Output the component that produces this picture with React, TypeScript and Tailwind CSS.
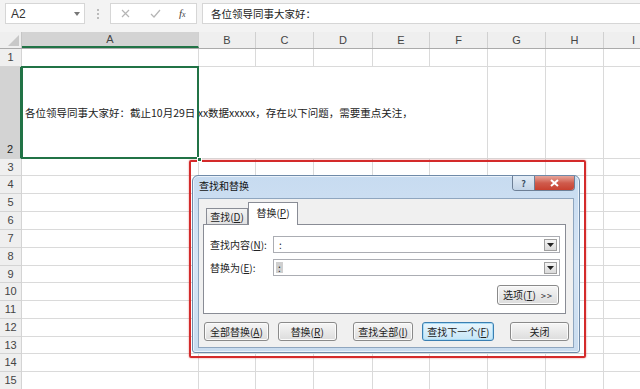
import React from "react";

const FONT = { fontFamily: '"Noto Sans CJK SC", "Liberation Sans", sans-serif' };

const cols = [
  { l: "A", w: 177 },
  { l: "B", w: 57 },
  { l: "C", w: 58 },
  { l: "D", w: 59 },
  { l: "E", w: 57 },
  { l: "F", w: 58 },
  { l: "G", w: 58 },
  { l: "H", w: 58 },
  { l: "I", w: 60 },
];

const rows: { n: number; h: number }[] = [
  { n: 1, h: 18 },
  { n: 2, h: 92 },
  { n: 3, h: 17 },
  { n: 4, h: 18 },
  { n: 5, h: 18 },
  { n: 6, h: 18 },
  { n: 7, h: 18 },
  { n: 8, h: 18 },
  { n: 9, h: 17 },
  { n: 10, h: 18 },
  { n: 11, h: 18 },
  { n: 12, h: 18 },
  { n: 13, h: 17 },
  { n: 14, h: 18 },
  { n: 15, h: 18 },
];

function U({ c }: { c: string }) {
  return <span className="underline underline-offset-1">{c}</span>;
}

function Btn({
  children,
  w,
  def,
  className,
}: {
  children: React.ReactNode;
  w: number;
  def?: boolean;
  className?: string;
}) {
  return (
    <div
      className={
        "h-[19px] flex items-center justify-center rounded-[3px] border text-[10px] text-[#222] leading-none " +
        (def
          ? "border-[#3c7fb1] bg-gradient-to-b from-[#eaf6fd] to-[#c4e5f6] shadow-[inset_0_0_0_1px_#a8dbf5] "
          : "border-[#8a8a8a] bg-gradient-to-b from-[#f6f6f6] to-[#dcdcdc] shadow-[inset_0_0_0_1px_#fbfbfb] ") +
        (className || "")
      }
      style={{ width: w }}
    >
      {children}
    </div>
  );
}

function DropBtn() {
  return (
    <div className="absolute right-[2px] top-[2px] w-[13px] h-[12px] border border-[#a0a0a0] bg-gradient-to-b from-[#f4f4f4] to-[#dadada] flex items-center justify-center">
      <svg width="7" height="4" viewBox="0 0 7 4">
        <path d="M0 0 H7 L3.5 4 Z" fill="#222" />
      </svg>
    </div>
  );
}

function Dialog() {
  return (
    <>
      {/* red highlight box */}
      <div className="absolute left-[189px] top-[160px] w-[397px] h-[198px] border-2 border-[#d42a2a] rounded-[2px] shadow-[0_0_2px_rgba(200,0,0,0.5)]" />
      <div
        className="absolute left-[192px] top-[175px] w-[388px] h-[178px] rounded-t-[6px] rounded-b-[3px] border border-[#6f8aa8] bg-gradient-to-b from-[#c7dbf0] via-[#d6e5f5] to-[#c9dcef] shadow-[inset_0_0_0_1px_#eaf2fb] flex flex-col px-[5px] pb-[4px]"
        style={FONT}
      >
        {/* title bar */}
        <div className="h-[22px] flex items-start relative">
          <span className="text-[10px] text-[#111] mt-[5px] ml-[1px] leading-none">查找和替换</span>
          <div className="absolute right-[-1px] top-[0px] flex h-[15px] rounded-b-[4px] overflow-hidden border border-t-0 border-[#6d7f96]">
            <div className="w-[22px] h-full bg-gradient-to-b from-[#e3ecf6] to-[#c2d3e6] flex items-center justify-center text-[9px] text-[#3b4d63] leading-none border-r border-[#6d7f96] font-bold">
              ?
            </div>
            <div className="w-[39px] h-full bg-gradient-to-b from-[#e6a49a] via-[#cf5b4c] to-[#c8402f] flex items-center justify-center">
              <svg width="9" height="8" viewBox="0 0 9 8">
                <path d="M1 1 L8 7 M8 1 L1 7" stroke="#fff" strokeWidth="2" />
              </svg>
            </div>
          </div>
        </div>
        {/* inner panel */}
        <div className="flex-1 bg-[#f0f0f0] border border-[#8fa6bf] flex flex-col px-[4px] pt-[1px]">
          {/* tabs */}
          <div className="flex items-end h-[24px] pl-[3px] relative z-10">
            <div className="h-[16px] w-[42px] border border-b-0 border-[#898c95] bg-gradient-to-b from-[#f3f3f3] to-[#e2e2e2] flex items-center justify-center text-[10px] text-[#222] leading-none">
              查找(<U c="D" />)
            </div>
            <div className="h-[23px] w-[50px] border border-b-0 border-[#898c95] bg-white flex items-start pt-[5px] justify-center text-[10px] text-[#222] leading-none mb-[-1px]">
              替换(<U c="P" />)
            </div>
          </div>
          {/* content */}
          <div className="h-[90px] mr-[3px] bg-white border border-[#898c95] relative flex flex-col px-[6px] pt-[11px] text-[10px] text-[#222] leading-none">
            <div className="flex items-center h-[17px]">
              <span className="w-[63px]">
                查找内容(<U c="N" />):
              </span>
              <div className="flex-1 mr-[-1px] h-[17px] border border-[#abadb3] bg-white relative flex items-center pl-[5px]">
                <span>:</span>
                <DropBtn />
              </div>
            </div>
            <div className="flex items-center h-[17px] mt-[6px]">
              <span className="w-[63px]">
                替换为(<U c="E" />):
              </span>
              <div className="flex-1 mr-[-1px] h-[17px] border border-[#abadb3] bg-white relative flex items-center pl-[2px]">
                <span className="bg-[#cfcfcf] px-[2px] h-[11px] flex items-center">:</span>
                <DropBtn />
              </div>
            </div>
            <div className="flex justify-end mt-[9px]">
              <Btn w={62} className="h-[20px] mr-[0px]">
                选项(<U c="T" />) <span className="ml-[5px] text-[9px] tracking-[1px]">&gt;&gt;</span>
              </Btn>
            </div>
          </div>
          {/* buttons */}
          <div className="flex mt-[8px] pl-[1px]">
            <Btn w={65}>
              全部替换(<U c="A" />)
            </Btn>
            <Btn w={59} className="ml-[9px]">
              替换(<U c="R" />)
            </Btn>
            <Btn w={61} className="ml-[16px]">
              查找全部(<U c="I" />)
            </Btn>
            <Btn w={72} def className="ml-[9px]">
              查找下一个(<U c="F" />)
            </Btn>
            <Btn w={59} className="ml-[16px]">
              关闭
            </Btn>
          </div>
        </div>
      </div>
    </>
  );
}

export default function App() {
  const text = "各位领导同事大家好：截止10月29日 xx数据xxxxx，存在以下问题，需要重点关注，";
  return (
    <div className="w-[640px] h-[389px] overflow-hidden relative bg-white" style={FONT}>
      {/* toolbar */}
      <div className="h-[32px] bg-[#f3f3f3] flex items-start pt-[3px]">
        <div className="ml-[5px] w-[80px] h-[21px] bg-white border border-[#d6d6d6] flex items-center pl-[5px] pr-[4px]">
          <span className="flex-1 text-[12px] text-[#333]" style={{ fontFamily: '"Liberation Sans", sans-serif' }}>
            A2
          </span>
          <svg width="6" height="4" viewBox="0 0 6 4">
            <path d="M0 0 H6 L3 4 Z" fill="#777" />
          </svg>
        </div>
        <div className="w-[25px] h-[21px] flex flex-col items-center justify-center gap-[2px]">
          <div className="w-[2px] h-[2px] bg-[#bbb]" />
          <div className="w-[2px] h-[2px] bg-[#bbb]" />
          <div className="w-[2px] h-[2px] bg-[#bbb]" />
        </div>
        <div className="w-[87px] h-[21px] bg-white border border-[#d6d6d6] flex items-center">
          <svg className="ml-[10px]" width="9" height="9" viewBox="0 0 9 9">
            <path d="M1 1 L8 8 M8 1 L1 8" stroke="#b5b5b5" strokeWidth="1.2" />
          </svg>
          <svg className="ml-[20px]" width="11" height="9" viewBox="0 0 11 9">
            <path d="M1 5 L4 8 L10 1" stroke="#b5b5b5" strokeWidth="1.2" fill="none" />
          </svg>
          <span
            className="ml-[18px] text-[11px] italic text-[#444]"
            style={{ fontFamily: '"Liberation Serif", serif' }}
          >
            f<span className="text-[8px]">x</span>
          </span>
        </div>
        <div className="ml-[5px] flex-1 h-[21px] bg-white border border-[#d6d6d6] border-r-0 flex items-center pl-[8px] text-[10.5px] text-[#222]">
          各位领导同事大家好：
        </div>
      </div>

      {/* column headers */}
      <div className="flex h-[17px] bg-[#efefef] border-b border-[#ababab]">
        <div className="w-[22px] shrink-0 border-r border-[#c6c6c6] relative">
          <svg className="absolute right-[2px] bottom-[2px]" width="11" height="11" viewBox="0 0 11 11">
            <path d="M11 0 V11 H0 Z" fill="#c8c8c8" />
          </svg>
        </div>
        {cols.map((c, i) => (
          <div
            key={c.l}
            className={
              "shrink-0 flex items-center justify-center text-[11px] text-[#444] border-r border-[#d0d0d0] " +
              (i === 0 ? "bg-[#d3d3d3] border-b-2 border-b-[#217346] text-[#222]" : "")
            }
            style={{ width: c.w, fontFamily: '"Liberation Sans", sans-serif' }}
          >
            {c.l}
          </div>
        ))}
      </div>

      {/* rows */}
      {rows.map((r) => (
        <div key={r.n} className="flex" style={{ height: r.h }}>
          <div
            className={
              "w-[22px] shrink-0 flex justify-center text-[11px] border-b border-[#d4d4d4] " +
              (r.n === 2
                ? "bg-[#d3d3d3] items-end pb-[1px] border-r-2 border-r-[#217346] text-[#222]"
                : "bg-[#efefef] items-center border-r border-[#c6c6c6] text-[#444]")
            }
            style={{ fontFamily: '"Liberation Sans", sans-serif' }}
          >
            {r.n}
          </div>
          {cols.map((c, i) => {
            const hideRight = r.n === 2 && i >= 1 && i <= 4;
            return (
              <div
                key={c.l}
                className={
                  "shrink-0 border-b border-[#dadada] relative " + (hideRight ? "" : "border-r")
                }
                style={{ width: c.w }}
              >
                {r.n === 2 && i === 0 && (
                  <>
                    <div className="absolute inset-[-1px] border-2 border-[#217346] z-10" />
                    <div className="absolute right-[-4px] bottom-[-4px] w-[5px] h-[5px] bg-[#217346] border border-white z-20" />
                    <div className="absolute left-[3px] top-0 bottom-0 flex items-center whitespace-nowrap text-[10.5px] text-[#222] z-0">
                      {text}
                    </div>
                  </>
                )}
              </div>
            );
          })}
        </div>
      ))}

      <Dialog />
    </div>
  );
}
